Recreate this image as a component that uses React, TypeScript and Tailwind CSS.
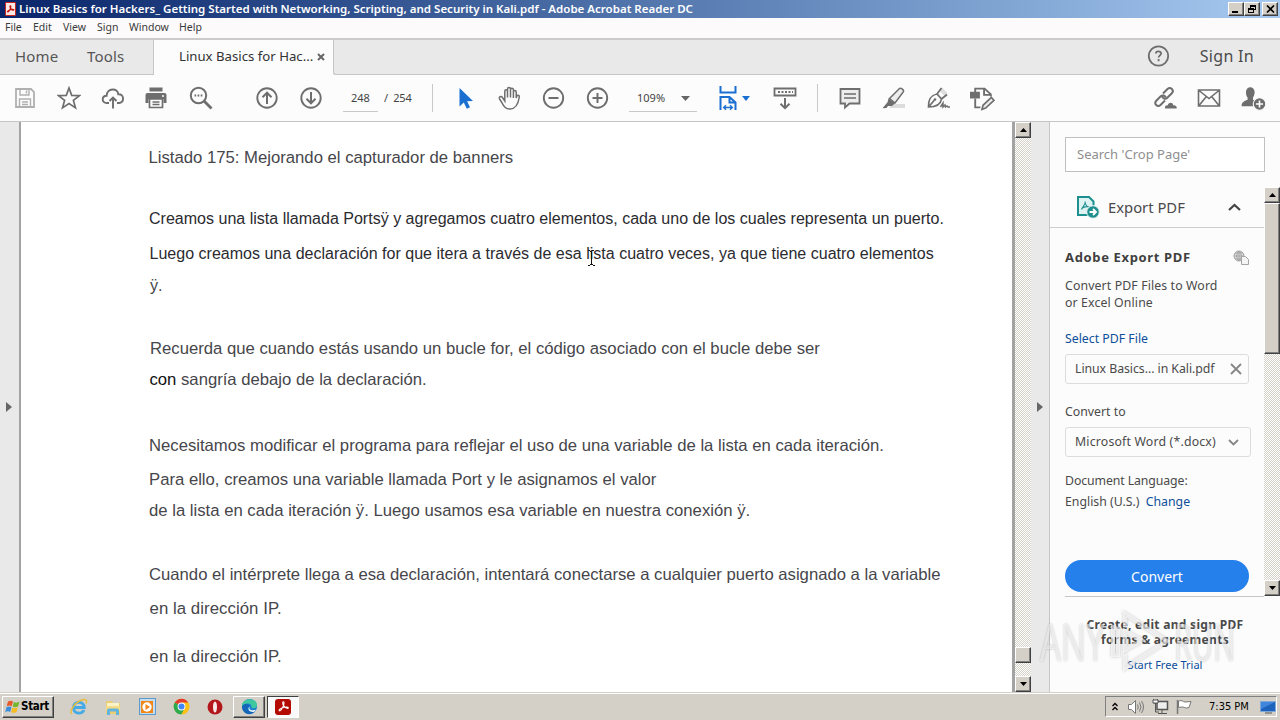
import type { ReactNode } from 'react'

const docLines = [
  { text: 'Listado 175: Mejorando el capturador de banners', cls: 'mt-[26px] ml-[127.5px] text-[16.7px]' },
  { text: 'Creamos una lista llamada Portsÿ y agregamos cuatro elementos, cada uno de los cuales representa un puerto.', cls: 'mt-[40px] ml-[128px] text-[16.04px] text-[#2b2b30]' },
  { text: 'Luego creamos una declaración for que itera a través de esa lista cuatro veces, ya que tiene cuatro elementos', cls: 'mt-[15px] ml-[128.5px] text-[16.05px] text-[#2b2b30]' },
  { text: 'ÿ.', cls: 'mt-[12px] ml-[129px] text-[16.2px]' },
  { text: 'Recuerda que cuando estás usando un bucle for, el código asociado con el bucle debe ser', cls: 'mt-[44px] ml-[129px] text-[16.7px]' },
  { lead: 'con', text: ' sangría debajo de la declaración.', cls: 'mt-[11px] ml-[128.5px] text-[16.68px]' },
  { text: 'Necesitamos modificar el programa para reflejar el uso de una variable de la lista en cada iteración.', cls: 'mt-[46px] ml-[128px] text-[16.68px]' },
  { text: 'Para ello, creamos una variable llamada Port y le asignamos el valor', cls: 'mt-[14px] ml-[128px] text-[16.7px]' },
  { text: 'de la lista en cada iteración ÿ. Luego usamos esa variable en nuestra conexión ÿ.', cls: 'mt-[11px] ml-[128px] text-[16.69px]' },
  { text: 'Cuando el intérprete llega a esa declaración, intentará conectarse a cualquier puerto asignado a la variable', cls: 'mt-[44px] ml-[128px] text-[16.68px]' },
  { text: 'en la dirección IP.', cls: 'mt-[14px] ml-[128.5px] text-[16.8px] tracking-[0.05px]' },
  { text: 'en la dirección IP.', cls: 'mt-[28px] ml-[128.5px] text-[16.8px] tracking-[0.05px]' },
]

const raised = 'border border-t-white border-l-white border-r-[#404040] border-b-[#404040] bg-[#d4d0c8] shadow-[inset_-1px_-1px_0_#808080]'

function Icon({ children, size = 24, className = '' }: { children: ReactNode; size?: number; className?: string }) {
  return (
    <svg
      width={size}
      height={size}
      viewBox="0 0 24 24"
      fill="none"
      stroke="currentColor"
      strokeWidth="2"
      className={`shrink-0 ${className}`}
    >
      {children}
    </svg>
  )
}

function Slot({ children }: { children: ReactNode }) {
  return <button className="flex w-11 shrink-0 items-center justify-center text-[#6e6e6e]">{children}</button>
}

function AcrobatMark({ className = '' }: { className?: string }) {
  return (
    <svg viewBox="0 0 16 16" fill="none" stroke="currentColor" className={className}>
      <path d="M2.500 12.500c0-1.500 5-3.800 9-3.800 3.500 0 3 2 .8 1.500C9.500 9.500 6.800 5.500 7 3.300c.2-1.800 1.800-1.500 1.700.3-.2 3.200-3.300 9.200-5 9.700-.7.2-1.200-.3-1.200-.8z" />
    </svg>
  )
}

function TitleBar() {
  return (
    <div className="flex h-[18px] shrink-0 items-center bg-linear-to-r from-[#0a246a] to-[#a6caf0] pl-[5px] pr-0.5">
      <div className="flex h-[14px] w-[11px] items-center justify-center rounded-[1px] border border-[#c9261c] bg-[#fbe9e7]">
        <AcrobatMark className="size-[10px] text-[#c4150c] stroke-2" />
      </div>
      <span className="ml-[3px] font-['Noto_Sans'] text-[11.53px] font-semibold whitespace-nowrap text-white">
        Linux Basics for Hackers_ Getting Started with Networking, Scripting, and Security in Kali.pdf - Adobe Acrobat Reader DC
      </span>
      <div className="ml-auto flex">
        <div className={`flex h-[14px] w-4 justify-center ${raised}`}>
          <div className="mt-[8px] mr-0.5 h-0.5 w-1.5 bg-black" />
        </div>
        <div className={`flex h-[14px] w-4 items-center justify-center ${raised}`}>
          <svg width="10" height="10" fill="none" stroke="#000" shapeRendering="crispEdges">
            <path d="M3 1h6M3.500 1v3M3 2h6M8.500 1v5M9 5.500H7" />
            <path d="M1 4.500h5M1 5h5M1.500 4v5M6.500 4v5M1 8.500h6" />
          </svg>
        </div>
        <div className={`ml-0.5 flex h-[14px] w-4 items-center justify-center ${raised}`}>
          <svg width="9" height="8" stroke="#000" strokeWidth="1.700">
            <path d="M1 .5 8 7.500M8 .5 1 7.500" />
          </svg>
        </div>
      </div>
    </div>
  )
}

function MenuBar() {
  return (
    <div className="flex h-[20px] shrink-0 items-center bg-[#fcfafa] pl-[5px] font-['Noto_Sans'] text-[10.5px] text-[#3a3a3a]">
      <span className="w-7">File</span>
      <span className="w-[30px]">Edit</span>
      <span className="w-[34px]">View</span>
      <span className="w-8">Sign</span>
      <span className="w-[50px]">Window</span>
      <span>Help</span>
    </div>
  )
}

function TabBar() {
  return (
    <div className="flex h-[37px] shrink-0 border-t-2 border-[#cbcbcb] bg-[#e9e9e9] font-['Noto_Sans']">
      <div className="flex w-[154px] items-center border-r border-b border-[#c6c6c6] pb-[2px] pl-[15px] text-[15px] tracking-[0.2px] text-[#555]">
        <span className="w-[72px]">Home</span>
        <span>Tools</span>
      </div>
      <div className="flex w-[179px] items-center bg-[#fcfcfc] pb-[2px] pl-[25px] text-[13.2px] text-[#333]">
        <span className="w-[138px] whitespace-nowrap">Linux Basics for Hac...</span>
        <svg width="8" height="8" stroke="#666" strokeWidth="2"><path d="m1 1 6 6M7 1 1 7" /></svg>
      </div>
      <div className="flex flex-1 items-center justify-end rounded-bl-[3px] border-b border-l border-[#c6c6c6] pr-[26px] pb-[2px]">
        <Icon className="text-[#6e6e6e]">
          <circle cx="11.500" cy="12" r="9.700" strokeWidth="1.800" />
          <path d="M8.800 9.500c.2-3 5.400-2.800 5.300.1 0 1.700-2.500 1.900-2.500 4M11.600 15v2.200" strokeWidth="1.800" />
        </Icon>
        <span className="ml-[29px] text-[16px] tracking-[0.3px] text-[#4b4b4b]">Sign In</span>
      </div>
    </div>
  )
}

function Toolbar() {
  return (
    <div className="flex h-[47px] shrink-0 items-stretch border-b border-[#c6c6c6] bg-[#fcfcfc] pl-[3px] font-['Noto_Sans'] text-[11px] text-[#444]">
      <Slot>
        <Icon className="text-[#b0b0b0]">
          <path d="M3 3h15l3 3v15H3z" strokeWidth="1.800" />
          <path d="M7 3v6h9V3M6.500 21v-8h11v8M13.500 4.500v3M9 16h6M9 18.500h6" strokeWidth="1.400" />
        </Icon>
      </Slot>
      <Slot>
        <Icon>
          <path d="m12 2 2.700 7.300 7.800.3-6.100 4.800 2.100 7.500-6.500-4.300-6.500 4.300 2.100-7.500L1.500 9.600l7.800-.3z" strokeWidth="1.700" />
        </Icon>
      </Slot>
      <Slot>
        <Icon>
          <path d="M8 17H5.800C.2 17 .6 9.800 5.600 9.800 5.800 1.500 17 1.700 17.300 8.300 23.600 7.800 23.500 17 18 17h-2M12 22.500V12M8.500 15 12 11.500l3.500 3.500" strokeWidth="1.900" />
        </Icon>
      </Slot>
      <Slot>
        <Icon className="mr-0.5">
          <path d="M5.500 1.500h13v4h-13zM1.500 9q0-2 2-2h17q2 0 2 2v8h-3v-4h-15v4h-3z" fill="currentColor" stroke="none" />
          <path d="M5.500 13h13v8.500h-13zM8.500 16h7M8.500 18.500h7" strokeWidth="1.700" />
          <path d="M18 10h2" stroke="#fff" strokeWidth="1.500" />
        </Icon>
      </Slot>
      <Slot>
        <Icon>
          <circle cx="9.500" cy="9.500" r="7.700" />
          <path d="m15 15 7.500 7.500" strokeWidth="2.800" />
          <path d="M5.500 9.500h8" strokeDasharray="1.700 1.400" />
        </Icon>
      </Slot>
      <div className="w-[22px]" />
      <Slot>
        <Icon>
          <circle cx="12" cy="12" r="9.700" strokeWidth="1.900" />
          <path d="M12 18V7M7.500 11.200 12 6.700l4.500 4.500" />
        </Icon>
      </Slot>
      <Slot>
        <Icon>
          <circle cx="12" cy="12" r="9.700" strokeWidth="1.900" />
          <path d="M12 6v11M7.500 12.800l4.500 4.500 4.500-4.500" />
        </Icon>
      </Slot>
      <div className="ml-[10px] mb-[9px] flex w-[35px] items-center border-b border-[#c9c9c9] pt-[10px] pl-2 tracking-[-0.1px]">248</div>
      <div className="my-[9px] flex w-[55px] items-center border-r border-[#c9c9c9] pl-[6px] tracking-[-0.2px] whitespace-pre">/  254</div>
      <div className="w-[11px]" />
      <Slot>
        <Icon className="text-[#1b6fd0]">
          <path d="M5.500 2v18.500l4.300-4 3 6.200 3.200-1.500-2.900-6 5.900-.3z" fill="currentColor" stroke="none" />
        </Icon>
      </Slot>
      <Slot>
        <Icon>
          <path d="M6.800 15V5.200c0-2 2.700-2 2.700 0v6.300V3.200c0-2.200 3-2.200 3 0v8.300V3.700c0-2 2.900-2 2.900 0v8.300V6c0-2 2.800-2 2.800 0v6l.4-1.500c.5-2 3-1.500 2.700.5-1 6.500-2.800 12-9.300 12-5 0-6.300-3-8.200-6.500L1.500 12.800c-.8-2 1.500-3 2.800-1.500z" strokeWidth="1.500" />
        </Icon>
      </Slot>
      <Slot>
        <Icon>
          <circle cx="11.500" cy="12" r="9.700" strokeWidth="1.900" />
          <path d="M6.500 12h10" />
        </Icon>
      </Slot>
      <Slot>
        <Icon>
          <circle cx="11.500" cy="12" r="9.700" strokeWidth="1.900" />
          <path d="M6.500 12h10M11.500 7v10" />
        </Icon>
      </Slot>
      <div className="ml-[9px] mb-[9px] flex w-[68px] items-center border-b border-[#c9c9c9] pt-[10px] pl-2">
        <span className="w-[44px]">109%</span>
        <svg width="9" height="5"><path d="M0 0h9L4.500 5z" fill="#666" /></svg>
      </div>
      <div className="flex w-[66px] items-center pl-[20px] text-[#1b6fd0]">
        <svg width="24" height="26" viewBox="0 0 24 26" fill="none" stroke="currentColor" strokeWidth="2" className="shrink-0">
          <path d="M3.500 1v6.500h15V1M3.500 25V12h9l6 5.500V25M12.500 12v5.500h6" />
          <path d="M6.500 22.500h9M9 20.300l-2.300 2.200L9 24.700M13 20.300l2.300 2.200L13 24.700" strokeWidth="1.400" />
        </svg>
        <svg width="8" height="5" className="ml-px"><path d="M0 0h8L4 5z" fill="currentColor" /></svg>
      </div>
      <Slot>
        <Icon>
          <path d="M1.500 2.500h21v7h-21z" strokeWidth="1.800" />
          <path d="M5 6h15" strokeDasharray="2 1.500" />
          <path d="M12 12v10M7.500 17.700l4.500 4.500 4.500-4.500" />
        </Icon>
      </Slot>
      <div className="my-[9px] mr-[10px] ml-[10px] w-px bg-[#c9c9c9]" />
      <Slot>
        <Icon>
          <path d="M2.500 3h19v14.500h-10L7 21.500v-4H2.500z" strokeWidth="1.800" fill="#ededed" />
          <path d="M6 8h12M6 12h12" strokeWidth="1.400" />
        </Icon>
      </Slot>
      <Slot>
        <Icon>
          <path d="M10 18h13v4H7z" fill="#dcdcdc" stroke="none" />
          <path d="M7.500 12.500 17.200 2.800q1.200-1.200 3.200.3 2 1.700.6 3.200L13 17z" strokeWidth="1.500" fill="#ededed" />
          <path d="m6.500 12.500 6.800 4.500-3.300 3H6l-1.500 2-4 .3 5-6z" fill="currentColor" stroke="none" />
        </Icon>
      </Slot>
      <Slot>
        <Icon>
          <path d="m14.500 3 5.500 5.500" stroke="#ddd" strokeWidth="4" />
          <path d="M2.500 21c-.2-7 1.500-11.500 8.500-13l4.500 5c-.8 5.500-4.500 8-13 8zM2.500 21 8.500 14M11 8l4.500-6M15.500 13l5.500-4.500" strokeWidth="1.700" />
          <circle cx="9" cy="13.500" r="1.300" fill="currentColor" stroke="none" />
          <path d="m14.500 21 2.500-4v4l2-2 .5 2 1.500-1 1 1h2" strokeWidth="1.500" />
        </Icon>
      </Slot>
      <Slot>
        <Icon size={25}>
          <path d="M1 6.500h7.500V11H1z" fill="currentColor" />
          <path d="M5 6V2.500h9L20 8v2M13.500 2.500V8.500H20M5 12v8.500h5" strokeWidth="1.800" />
          <path d="m11.500 22.500 1-4 8-7.500 2.500 2.700-8 7.500z" fill="#eee" strokeWidth="1.600" />
        </Icon>
      </Slot>
      <div className="flex-1" />
      <Slot>
        <Icon>
          <path d="M10 7.500 14.500 3c3-2.800 7.200 1.200 4.300 4.300l-4.500 4.500c-1.700 1.700-4 1-5.200-1M12 14.500 7.500 19c-3 2.700-7-1.200-4.200-4.200L7.700 10.300c1.800-1.600 4-.8 5.100.9" />
          <path d="M12 22.500c-.5-3 2-3.800 2.700-3 .6-3.500 5-3.500 5.600-.3 2-.4 4 1 3.300 3.300z" fill="currentColor" stroke="none" />
        </Icon>
      </Slot>
      <Slot>
        <Icon>
          <path d="M1.500 4h21v16h-21zM2 4.500l10 8 10-8M2 19.500 9 11M22 19.500 15 11" strokeWidth="1.600" />
        </Icon>
      </Slot>
      <Slot>
        <Icon size={26}>
          <path d="M5.500 6.500c0-6 8-6 8 0 0 2.500-.7 4-1.500 5v2l4.500 2-1.500 4H1.500c0-4 2-4.500 5.500-6v-2c-1-1-1.500-2.500-1.500-5z" fill="currentColor" stroke="none" />
          <circle cx="18" cy="17.500" r="5.800" fill="#6e6e6e" stroke="#fcfcfc" strokeWidth="1" />
          <path d="M14.700 17.500h6.600M18 14.200v6.600" stroke="#fff" strokeWidth="1.500" />
        </Icon>
      </Slot>
      <div className="w-[5px]" />
    </div>
  )
}

function ArrowButton({ down = false }: { down?: boolean }) {
  return (
    <div className={`flex h-4 shrink-0 items-center justify-center ${raised}`}>
      <svg width="7" height="4"><path d={down ? 'M0 0h7L3.500 4z' : 'M0 4h7L3.500 0z'} fill="#000" /></svg>
    </div>
  )
}

const track = 'bg-[repeating-conic-gradient(#fff_0_25%,#d6d2ca_0_50%)] bg-[length:2px_2px]'

function DocumentView() {
  return (
    <div className="flex min-w-0 flex-1">
      <div className="flex w-[21px] items-center border-r-2 border-[#a3a3a3] bg-[#e9e9e9] pl-[6px]">
        <svg width="7" height="10"><path d="M0 0v10l6-5z" fill="#666" /></svg>
      </div>
      <div className="flex w-[991px] flex-col bg-white font-['Liberation_Sans'] text-[#46464b]">
        {docLines.map((line, i) => (
          <p key={i} className={`h-5 leading-5 whitespace-pre ${line.cls}`}>
            {line.lead && <span className="text-[#111]">{line.lead}</span>}
            {line.text}
          </p>
        ))}
      </div>
      <div className={`flex w-[19px] flex-col border-l-3 border-[#a3a3a3] ${track}`}>
        <ArrowButton />
        <div className="flex-1" />
        <div className={`h-4 ${raised}`} />
        <div className="h-[13px]" />
        <ArrowButton down />
      </div>
      <div className="flex w-[18px] items-center bg-[#e9e9e9] pl-[6px]">
        <svg width="7" height="10"><path d="M0 0v10l6-5z" fill="#666" /></svg>
      </div>
    </div>
  )
}

function ExportIcon() {
  return (
    <svg width="24" height="24" viewBox="0 0 24 24" fill="none" stroke="#1d8f8f" strokeWidth="2">
      <path d="M2 2h11l4.500 4.500V20H2z" fill="#e0f3f3" />
      <path d="M5.500 14.500c1-2.500 4-4.500 3.800-8M9.300 8c.5 2.500 2.500 4 4.700 4M6.500 13c2-1.200 4-1.500 6-1.300" strokeWidth="1.100" />
      <circle cx="17" cy="17" r="6.300" fill="#1d8f8f" stroke="#fafafa" strokeWidth="1" />
      <path d="M13.500 17h5M17 14l3 3-3 3" stroke="#fff" strokeWidth="1.800" />
    </svg>
  )
}

function ToolsPane() {
  return (
    <aside className="flex w-[231px] shrink-0 flex-col border-l border-[#c6c6c6] bg-[#fcfcfc] font-['Noto_Sans'] text-[12.3px] text-[#4a4a4a]">
      <div className="mt-[15px] ml-[15px] flex h-[35px] w-[200px] shrink-0 items-center border border-[#c0c0c0] bg-white pt-px pl-[11px] text-[13px] text-[#8f8f8f]">
        Search 'Crop Page'
      </div>
      <div className="mt-[15px] flex h-[409px] shrink-0">
        <div className="flex w-[214px] flex-col">
          <div className="flex h-[41px] shrink-0 items-center border-b border-[#cfcfcf] pl-[26px]">
            <ExportIcon />
            <span className="ml-2 w-[120px] text-[14.8px]">Export PDF</span>
            <svg width="13" height="8" fill="none" stroke="#444" strokeWidth="2.200"><path d="m1 7 5.500-5L12 7" /></svg>
          </div>
          <div className="ml-[15px] flex flex-col whitespace-nowrap">
            <div className="mt-5 flex h-5 items-center text-[13px] font-bold tracking-[0.65px] text-[#3f3f3f]">
              <span className="w-[168px]">Adobe Export PDF</span>
              <svg width="16" height="16" fill="none" stroke="#a5a5a5">
                <circle cx="6" cy="6" r="5" fill="#ddd" />
                <path d="M1 6h10M6 1v10M2 3h8M2 9h8M6 1c-3 3-3 7 0 10M6 1c3 3 3 7 0 10" />
                <path d="M8.500 6.500h4l3 3v5h-7z" fill="#f4f4f4" />
              </svg>
            </div>
            <p className="mt-[9px] leading-[17px] tracking-[0.12px]">Convert PDF Files to Word<br />or Excel Online</p>
            <p className="mt-[19px] leading-[17px] text-[#0d4f9a]">Select PDF File</p>
            <div className="mt-[7px] flex h-[30px] w-[184px] items-center rounded-[3px] border border-[#dcdcdc] pl-[9px]">
              <span className="w-[155px] tracking-[-0.05px]">Linux Basics... in Kali.pdf</span>
              <svg width="12" height="12" stroke="#858585" strokeWidth="1.800"><path d="m1 1 10 10M11 1 1 11" /></svg>
            </div>
            <p className="mt-[19px] leading-[17px]">Convert to</p>
            <div className="mt-[7px] flex h-[30px] w-[186px] items-center rounded-[3px] border border-[#dcdcdc] pl-[9px]">
              <span className="w-[153px] tracking-[0.18px]">Microsoft Word (*.docx)</span>
              <svg width="11" height="7" fill="none" stroke="#858585" strokeWidth="1.800"><path d="m1 1 4.500 4.500L10 1" /></svg>
            </div>
            <p className="mt-[15px] leading-[17px] tracking-[-0.1px]">Document Language:</p>
            <p className="mt-1 leading-[17px]">
              English (U.S.) <a className="ml-[3px]  text-[#0d4f9a]">Change</a>
            </p>
            <button className="mt-[50px] h-8 w-[184px] shrink-0 rounded-full bg-[#2680eb] text-[14px] text-white">Convert</button>
            <div className="mt-[4px] h-px bg-[#c6c6c6]" />
          </div>
        </div>
        <div className={`flex flex-1 flex-col ${track}`}>
          <ArrowButton />
          <div className={`h-[151px] ${raised}`} />
          <div className="flex-1" />
          <ArrowButton down />
        </div>
      </div>
      <div className="flex flex-col items-center pt-[21px] text-center">
        <p className="text-[12px] leading-[15px] font-bold tracking-[0.3px] whitespace-nowrap">Create, edit and sign PDF<br />forms &amp; agreements</p>
        <a className="mt-[10px] text-[11px] leading-[15px] text-[#0d4f9a]">Start Free Trial</a>
      </div>
    </aside>
  )
}

function Watermark() {
  return (
    <div className="pointer-events-none absolute top-[609px] left-[1040px] flex h-[64px] items-center font-['Open_Sans'] text-[51px] leading-none text-white/55 [text-shadow:0_0_3px_rgba(0,0,0,0.22)]">
      <span className="w-[70px] origin-left scale-x-[0.65]">ANY</span>
      <svg width="60" height="64" viewBox="0 0 60 64" fill="none" stroke="#fff" strokeOpacity=".6" strokeWidth="4" className="drop-shadow-[0_0_1.5px_rgba(0,0,0,0.35)]">
        <path d="M15 18V5l42 27-42 27V45M3 18v28h5V20zM15 22v19l17-9.500z" />
      </svg>
      <span className="ml-[4px] w-[62px] origin-left scale-x-[0.57]">RUN</span>
    </div>
  )
}

function Pointer() {
  return (
    <svg width="9" height="17" className="absolute top-[250px] left-[587px]" stroke="#111" fill="none" shapeRendering="crispEdges">
      <path d="M1 .5h2M5 .5h2M3 1.500h2M4.500 2v12M3 14.500h3M1 15.500h2M6 15.500h2" />
    </svg>
  )
}

function Taskbar() {
  return (
    <div className="flex h-[28px] shrink-0 items-center border-t border-[#d4d0c8] bg-[#d4d0c8] pl-0.5 shadow-[inset_0_1px_0_#fff]">
      <button className={`flex h-[22px] w-[52px] items-center pl-0.5 font-['DejaVu_Sans_Condensed','DejaVu_Sans'] text-[11.5px] font-bold tracking-[-0.3px] text-black ${raised}`}>
        <svg width="16" height="16" viewBox="0 0 16 16" className="shrink-0">
          <path d="M3 2.500c2-1.300 3.500-1 5 0L6.700 7.200c-1.600-1-3.200-1-5 0z" fill="#e8582a" />
          <path d="M8.800 3c2 1 3.500.8 5.700-.5l-1.300 4.700c-2 1.200-3.600 1.200-5.500.3z" fill="#75b62e" />
          <path d="M1.500 8.200c1.700-1 3.300-1 5 0L5.200 13c-1.600-1-3.200-1-5 .2z" fill="#3a8edb" />
          <path d="M7.400 8.600c2 .9 3.500.8 5.500-.3l-1.300 4.600c-2 1.200-3.500 1.200-5.500.3z" fill="#f5bd21" />
        </svg>
        <span className="pt-px">Start</span>
      </button>
      <div className="ml-2 flex items-center">
        {/* Internet Explorer */}
        <div className="flex w-[34px] justify-center">
          <svg width="18" height="18" viewBox="0 0 18 18" fill="none">
            <path d="M14 12c-2 4.500-10.500 4.500-10.500-2.500S14 2.500 14.300 9.500H5" stroke="#45aae6" strokeWidth="2.800" />
            <path d="M2 16C-1.500 13 6 2.500 14 1.500c3-.3 3 2 2 4" stroke="#e9bd3c" strokeWidth="1.400" />
          </svg>
        </div>
        {/* Explorer */}
        <div className="flex w-[34px] justify-center">
          <svg width="18" height="18" viewBox="0 0 18 18">
            <path d="M2 3h6l1 2h7v11H2z" fill="#e9cf72" />
            <path d="M3 5h12v5H3z" fill="#fbf3c8" />
            <path d="M2 8h14v5H2z" fill="#f3dc85" />
            <path d="M3 17v-4.500q0-2 2-2h8q2 0 2 2V17h-3v-3.500H6V17z" fill="#62b3dd" />
          </svg>
        </div>
        {/* Media Player */}
        <div className="flex w-[34px] justify-center">
          <div className="flex size-[17px] items-center justify-center border border-[#5b9bd0] bg-[#c4dcee]">
            <svg width="14" height="14"><path d="M1 1h12v12H1z" fill="#f08718" /><circle cx="7" cy="7" r="4.700" fill="#fff" /><path d="M5.500 4v6l4.500-3z" fill="#f08718" /></svg>
          </div>
        </div>
        {/* Chrome */}
        <div className="flex w-[34px] justify-center">
          <svg width="17" height="17" viewBox="0 0 48 48">
            <circle cx="24" cy="24" r="22" fill="#fbc116" />
            <path d="M24 24 4.900 13A22 22 0 0 1 43.100 13z" fill="#e33b2e" />
            <path d="M24 24 4.900 13A22 22 0 0 0 24 46l9.500-16.500z" fill="#2da94f" />
            <path d="M24 13h19.100A22 22 0 0 1 24 46l9.500-16.500z" fill="#fbc116" />
            <circle cx="24" cy="24" r="11" fill="#fff" />
            <circle cx="24" cy="24" r="8.500" fill="#4285f4" />
          </svg>
        </div>
        {/* Opera */}
        <div className="flex w-[34px] justify-center">
          <svg width="16" height="16"><circle cx="8" cy="8" r="7.500" fill="#b3161b" /><ellipse cx="8" cy="8" rx="2" ry="5.500" fill="#f7e9e9" /></svg>
        </div>
        {/* Edge */}
        <div className={`ml-[1px] flex h-[22px] w-8 items-center justify-center ${raised}`}>
          <svg width="17" height="17" viewBox="0 0 18 18">
            <circle cx="9" cy="9" r="8" fill="#1b7fd0" />
            <path d="M1 9C1-1 17-1 17 7.500c0 4-5 4-6 2.500C12 5 5 4 1 9z" fill="#3fc7a0" />
            <path d="M1 9c3-4.500 8-3 8 0-4 1-2 7 5.500 5.500C9 20 1 16 1 9z" fill="#1467b8" />
            <path d="M9 9c-1 3 2 5 6.500 3.500-.4 1-.8 1.500-1.500 2-4 1-8-2-5-5.500z" fill="#e8f2f8" />
          </svg>
        </div>
        <div className="ml-0.5 flex h-[22px] w-8 items-center justify-center border border-t-[#404040] border-l-[#404040] border-r-white border-b-white bg-[#fbfafa]">
          <div className="flex size-4 items-center justify-center rounded-[3px] bg-[#b30b00] text-white">
            <AcrobatMark className="size-[13px] stroke-[1.3]" />
          </div>
        </div>
      </div>
      <div className="mr-[3px] ml-auto flex h-[21px] w-[172px] items-center border border-t-[#808080] border-l-[#808080] border-r-white border-b-white pl-[6px] font-['DejaVu_Sans_Condensed','DejaVu_Sans'] text-[11px] text-black">
        <svg width="6" height="9" fill="none" stroke="#000" strokeWidth="1.300"><path d="m.5 4 2.500-2.500L5.500 4M.5 8 3 5.500 5.500 8" /></svg>
        <svg width="18" height="16" viewBox="0 0 18 16" fill="none" stroke="#777" className="ml-[9px]">
          <path d="M1.500 5.500h3l4-4v13l-4-4h-3z" fill="#fff" />
          <path d="M10.500 5.500q1.500 2.500 0 5M12.500 3.500q3 4.500 0 9M14.500 2q4 6 0 12" />
        </svg>
        <svg width="17" height="17" viewBox="0 0 17 17" fill="none" stroke="#555" className="ml-[7px]">
          <path d="M5 3.500h10.500v8H5z" fill="#eee" strokeWidth="1.500" />
          <path d="M6 15.500h9M10 12v3M1.500 1v4h4V1M3.500 5v9H7" />
          <path d="M1 2h5v3H1z" fill="#fff" />
        </svg>
        <svg width="17" height="16" viewBox="0 0 17 16" className="ml-[7px]">
          <path d="M2.500 2c4-1.500 4 1 6.500 1l6-.5-2 6c-4 1.500-5-1-7.500-.5l-3 .5z" fill="#fff" stroke="#777" />
          <path d="M1.500 1v14" stroke="#777" strokeWidth="1.500" />
        </svg>
        <span className="ml-[16px] w-[51px] pt-px whitespace-nowrap">7:35 PM</span>
        <svg width="16" height="14" className="shrink-0"><path d="M.5 1.500h15v10H.5z" fill="#1d62bb" stroke="#7fa8d8" /><path d="M1 2h14L1 9z" fill="#3f86dc" /><path d="M5 13h7" stroke="#555" /></svg>
      </div>
    </div>
  )
}

export default function App() {
  return (
    <div className="relative flex h-[720px] w-[1280px] flex-col overflow-hidden bg-[#fcfcfc]">
      <TitleBar />
      <MenuBar />
      <TabBar />
      <Toolbar />
      <div className="flex min-h-0 flex-1">
        <DocumentView />
        <ToolsPane />
      </div>
      <Taskbar />
      <Watermark />
      <Pointer />
    </div>
  )
}
